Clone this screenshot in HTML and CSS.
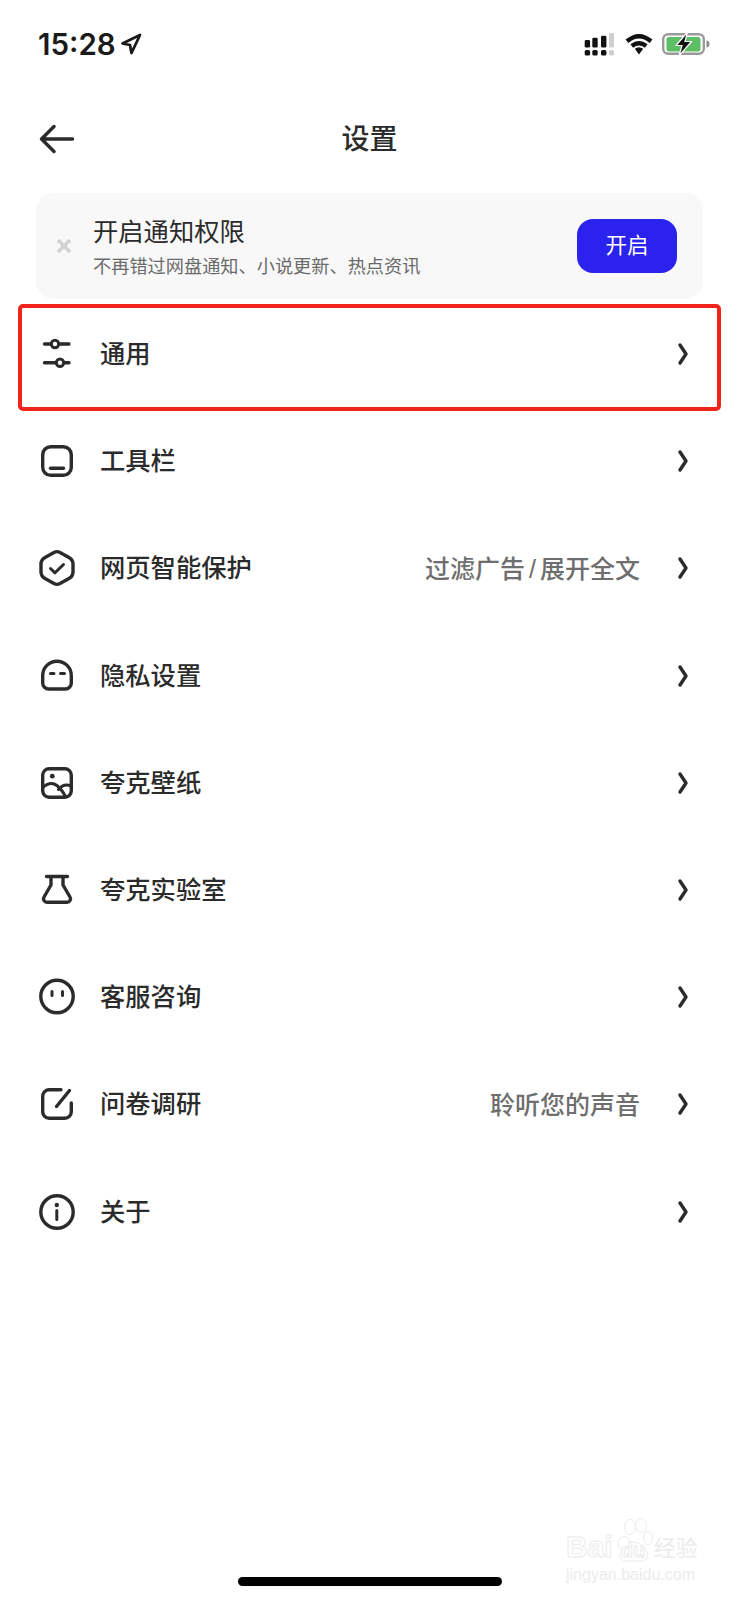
FILE: index.html
```html
<!DOCTYPE html>
<html>

	<head>
		<meta charset="utf-8" />
		<title>设置</title>
		<link rel="stylesheet" href="styles.css">
	</head>

	<body>
		<div class="page">
			<div class="status">
				<div class="status-left">
					<span class="time">15:28</span>
					<svg class="loc" width="24" height="24" viewBox="0 0 24 24"><path d="M21 3 3.500 11.500 11 13l1.500 8z" /></svg>
				</div>
				<div class="status-right">
					<svg width="31" height="24" viewBox="0 0 31 24">
						<rect x="0.700" y="8" width="5.400" height="7.600" rx="1.400" />
						<rect x="8.300" y="5.700" width="5.400" height="9.900" rx="1.400" />
						<rect x="17" y="3.700" width="5.400" height="11.900" rx="1.400" />
						<rect class="off" x="25" y="1" width="5" height="14.600" rx="1" />
						<rect x="0.700" y="18" width="5.400" height="5.600" rx="1.600" />
						<rect x="8.300" y="18" width="5.400" height="5.600" rx="1.600" />
						<rect x="17" y="18" width="5.400" height="5.600" rx="1.600" />
						<rect class="off" x="25" y="18" width="5" height="5.600" rx="1.600" />
					</svg>
					<svg class="wifi" width="28" height="22" viewBox="0 0 28 22">
						<path class="wave" d="M2 8.200Q14-1.800 26 8.200" />
						<path class="wave" d="M6.800 13Q14 7.400 21.200 13" />
						<path d="M9.800 15.800Q14 12.800 18.200 15.800L14 21.500z" />
					</svg>
					<svg class="batt" width="48" height="24" viewBox="0 0 48 24">
						<rect class="batt-box" x="1.200" y="2.200" width="40.600" height="19.600" rx="5" />
						<rect class="batt-fill" x="4.500" y="5" width="34" height="14.500" rx="2.500" />
						<path class="batt-nub" d="M44.500 8.500c2 0 3 1.500 3 3.500s-1 3.500-3 3.500z" />
						<path class="bolt" d="M25.500 0 14 13.500h6L17 24 29.500 9.500h-6.500z" />
					</svg>
				</div>
			</div>

			<div class="nav">
				<svg class="back" width="38" height="38" viewBox="0 0 38 38">
					<path d="M34.500 19H4M16 6.500 3.500 19 16 31.500" />
				</svg>
				<div class="nav-title">设置</div>
			</div>

			<div class="notice">
				<svg class="notice-close" width="16" height="16" viewBox="0 0 16 16"><path d="M2 2l12 12M14 2 2 14" /></svg>
				<div class="notice-text">
					<div class="notice-title">开启通知权限</div>
					<div class="notice-sub">不再错过网盘通知、小说更新、热点资讯</div>
				</div>
				<div class="notice-btn">开启</div>
			</div>

			<ul class="list">
				<li>
					<svg class="ico" viewBox="0 0 38 38">
						<path d="M6.500 9H31M6.500 27.700H31" />
						<circle class="hole" cx="17" cy="9" r="3.700" />
						<circle class="hole" cx="22" cy="27.700" r="3.700" />
					</svg>
					<span class="name">通用</span>
					<svg class="arrow" viewBox="0 0 12 24"><path d="M3 3l6 9-6 9" /></svg>
				</li>
				<li>
					<svg class="ico" viewBox="0 0 38 38">
						<rect x="4.700" y="4.700" width="28.600" height="28.600" rx="8" />
						<path d="M12.500 26.200h13" />
					</svg>
					<span class="name">工具栏</span>
					<svg class="arrow" viewBox="0 0 12 24"><path d="M3 3l6 9-6 9" /></svg>
				</li>
				<li>
					<svg class="ico" viewBox="0 0 38 38">
						<path d="M16 3.500Q19 1.800 22 3.500L31 8.500Q35 10.800 35 15V23Q35 27.200 31 29.500L22 34.500Q19 36.200 16 34.500L7 29.500Q3 27.200 3 23V15Q3 10.800 7 8.500z" />
						<path class="thin" d="M12.500 19.500l4.500 4.300 8.500-8.300" />
					</svg>
					<span class="name">网页智能保护</span>
					<span class="extra">过滤广告<span class="slash">/</span>展开全文</span>
					<svg class="arrow" viewBox="0 0 12 24"><path d="M3 3l6 9-6 9" /></svg>
				</li>
				<li>
					<svg class="ico" viewBox="0 0 38 38">
						<path d="M4.700 18.500a14.300 14.300 0 0 1 28.600 0v7.500a6 6 0 0 1-6 6H10.700a6 6 0 0 1-6-6z" />
						<path class="thin" d="M12.500 16.500h3.500M22.500 16.500h4" />
					</svg>
					<span class="name">隐私设置</span>
					<svg class="arrow" viewBox="0 0 12 24"><path d="M3 3l6 9-6 9" /></svg>
				</li>
				<li>
					<svg class="ico" viewBox="0 0 38 38">
						<rect x="4.700" y="4.700" width="28.600" height="28.600" rx="6.500" />
						<circle class="dot" cx="14.300" cy="12.200" r="2.400" />
						<path class="thin" d="M4.700 23.500c4-3.500 8-5 11.500-3.500 4.500 2 8 6.500 11 12" />
						<path class="thin" d="M20.500 25.500c3.500-4.500 8-5.500 12.800-3.500" />
					</svg>
					<span class="name">夸克壁纸</span>
					<svg class="arrow" viewBox="0 0 12 24"><path d="M3 3l6 9-6 9" /></svg>
				</li>
				<li>
					<svg class="ico" viewBox="0 0 38 38">
						<path d="M8.500 5.500h21M13 5.500v8.500L6 26a3.500 3.500 0 0 0 3 5.300h20a3.500 3.500 0 0 0 3-5.300L25 14V5.500" />
					</svg>
					<span class="name">夸克实验室</span>
					<svg class="arrow" viewBox="0 0 12 24"><path d="M3 3l6 9-6 9" /></svg>
				</li>
				<li>
					<svg class="ico" viewBox="0 0 38 38">
						<circle cx="19" cy="18.500" r="16.200" />
						<path class="thin" d="M14 13.500v4M24.500 13.500v4" />
					</svg>
					<span class="name">客服咨询</span>
					<svg class="arrow" viewBox="0 0 12 24"><path d="M3 3l6 9-6 9" /></svg>
				</li>
				<li>
					<svg class="ico" viewBox="0 0 38 38">
						<path d="M23 4.700H11.200a6.500 6.500 0 0 0-6.500 6.500v15.600a6.500 6.500 0 0 0 6.500 6.500h15.600a6.500 6.500 0 0 0 6.500-6.500V18" />
						<path d="M31.500 5.500 18.500 21.500" />
					</svg>
					<span class="name">问卷调研</span>
					<span class="extra">聆听您的声音</span>
					<svg class="arrow" viewBox="0 0 12 24"><path d="M3 3l6 9-6 9" /></svg>
				</li>
				<li>
					<svg class="ico" viewBox="0 0 38 38">
						<circle cx="19" cy="19" r="16.200" />
						<circle class="dot" cx="18.800" cy="12" r="2.200" />
						<path class="thin" d="M18.800 17.500v9" />
					</svg>
					<span class="name">关于</span>
					<svg class="arrow" viewBox="0 0 12 24"><path d="M3 3l6 9-6 9" /></svg>
				</li>
			</ul>

			<div class="home"></div>

			<!-- red marker around the first row -->
			<div class="marker"></div>

			<div class="mark">
				<div class="mark-top">
					<span class="mark-bai">Bai</span>
					<span class="mark-paw">
						<svg width="40" height="46" viewBox="0 0 40 46">
							<ellipse cx="11" cy="25" rx="6" ry="6.500" />
							<ellipse cx="17" cy="9" rx="5.500" ry="7.500" />
							<ellipse cx="28" cy="7.500" rx="5.500" ry="7" />
							<ellipse cx="35" cy="20" rx="4.500" ry="6.500" />
							<path d="M8 41c-5-5 3-8 6-12 3-5 9-7 14-2 3 3 9 8 6 13-2 4-8 3-13 3s-10 1-13-2z" />
						</svg>
						<span class="mark-du">du</span>
					</span>
					<span class="mark-jy">经验</span>
				</div>
				<div class="mark-url">jingyan.baidu.com</div>
			</div>
		</div>
	</body>

</html>
```

FILE: styles.css
```css
* {
	box-sizing: border-box;
}

body {
	margin: 0;
	background: #fff;
	font-family: "Liberation Sans", "Noto Sans CJK SC", sans-serif;
	color: #2b2b2b;
}

.page {
	position: relative;
	width: 739px;
	height: 1600px;
	display: flex;
	flex-direction: column;
	overflow: hidden;
}

/* status bar */
.status {
	height: 88px;
	padding: 32px 29px 0 38px;
	display: flex;
	justify-content: space-between;
	align-items: flex-start;
}

.status-left {
	display: flex;
	align-items: center;
	gap: 3px;
	height: 24px;
}

.time {
	font-family: Inter, sans-serif;
	font-size: 29.500px;
	font-weight: 600;
	color: #1a1a1a;
}

.loc path {
	fill: none;
	stroke: #1a1a1a;
	stroke-width: 2.800;
	stroke-linejoin: round;
}

.status-right {
	display: flex;
	align-items: center;
}

.status-right svg {
	display: block;
}

.status-right .wifi {
	margin: 0 9px 0 10px;
}

.status-right rect {
	fill: #111;
}

.status-right rect.off {
	fill: #cfcfcf;
}

.status-right .wifi path {
	fill: #111;
}

.status-right .wifi path.wave {
	fill: none;
	stroke: #111;
	stroke-width: 4.400;
}

.status-right rect.batt-box {
	fill: none;
	stroke: #9a9a9a;
	stroke-width: 2.400;
}

.status-right rect.batt-fill {
	fill: #5cbf65;
}

.batt-nub {
	fill: #8e8e8e;
}

.bolt {
	fill: #111;
	stroke: #fff;
	stroke-width: 1.200;
}

/* top bar */
.nav {
	position: relative;
	height: 105px;
	padding: 0 38px 3px;
	display: flex;
	align-items: center;
}

.back path {
	fill: none;
	stroke: #2b2b2b;
	stroke-width: 3.500;
	stroke-linecap: round;
	stroke-linejoin: round;
}

.nav-title {
	flex: 1;
	margin-right: 38px;
	padding-bottom: 4px;
	text-align: center;
	font-size: 28px;
	font-weight: 500;
}

/* notice */
.notice {
	margin: 0 36px;
	height: 106px;
	padding: 0 26px 0 20px;
	background: #f8f8f8;
	border-radius: 18px;
	display: flex;
	align-items: center;
}

.notice-close {
	flex: none;
	margin-right: 22px;
}

.notice-close path {
	fill: none;
	stroke: #d2d2d2;
	stroke-width: 3.500;
}

.notice-text {
	flex: 1;
	margin-left: -1px;
	padding-top: 3px;
}

.notice-title {
	font-size: 25.300px;
	line-height: 34px;
}

.notice-sub {
	margin-top: 5px;
	font-size: 18.200px;
	line-height: 26px;
	color: #6a6a6a;
}

.notice-btn {
	width: 100px;
	height: 54px;
	border-radius: 16px;
	background: #2b22ee;
	color: #fff;
	font-size: 21.500px;
	line-height: 54px;
	text-align: center;
}

/* rows */
.list {
	list-style: none;
	margin: 1.500px 0 0;
	padding: 0;
}

.list li {
	height: 107.200px;
	padding: 0 50px 0 38px;
	display: flex;
	align-items: center;
}

.ico {
	flex: none;
	width: 38px;
	height: 38px;
	margin-right: 24px;
	fill: none;
	stroke: #2b2b2b;
	stroke-width: 3.400;
	stroke-linecap: round;
	stroke-linejoin: round;
}

.ico .hole {
	fill: #fff;
	stroke-width: 3;
}

.ico .dot {
	fill: #2b2b2b;
	stroke: none;
}

.ico .thin {
	stroke-width: 3;
}

.name {
	flex: 1;
	padding-bottom: 4px;
	font-size: 25.300px;
	font-weight: 500;
}

.extra {
	margin-right: 37px;
	padding-bottom: 3px;
	font-size: 25px;
	font-weight: 500;
	color: #6e6e6e;
}

.slash {
	margin: 0 4px;
}

.arrow {
	flex: none;
	width: 12px;
	height: 24px;
	fill: none;
	stroke: #2b2b2b;
	stroke-width: 3.400;
	stroke-linecap: round;
	stroke-linejoin: round;
}

.home {
	margin: auto auto 14px;
	width: 264px;
	height: 9px;
	border-radius: 5px;
	background: #000;
}

.marker {
	position: absolute;
	left: 18px;
	top: 303.500px;
	width: 703px;
	height: 107px;
	border: 4px solid #f0241a;
	border-radius: 5px;
}

/* watermark */
.mark {
	position: absolute;
	left: 566px;
	top: 1518px;
	width: 134px;
	color: #ececec;
}

.mark-top {
	display: flex;
	align-items: flex-end;
	height: 46px;
}

.mark-bai,
.mark-du {
	font-weight: 700;
	color: #fff;
	-webkit-text-stroke: 1px #ebebeb;
}

.mark-bai {
	font-size: 30px;
	line-height: 34px;
}

.mark-paw {
	position: relative;
	width: 40px;
	height: 46px;
}

.mark-paw svg {
	display: block;
}

.mark-paw ellipse,
.mark-paw path {
	fill: #fff;
	stroke: #ebebeb;
	stroke-width: 1;
}

.mark-du {
	position: absolute;
	left: 8px;
	bottom: 4px;
	font-size: 20px;
	line-height: 20px;
}

.mark-jy {
	margin-left: 1px;
	font-size: 22px;
	line-height: 30px;
	white-space: nowrap;
	color: #ebebeb;
}

.mark-url {
	margin-top: 2px;
	font-size: 16px;
	line-height: 18px;
	white-space: nowrap;
	color: #ececec;
}
```
